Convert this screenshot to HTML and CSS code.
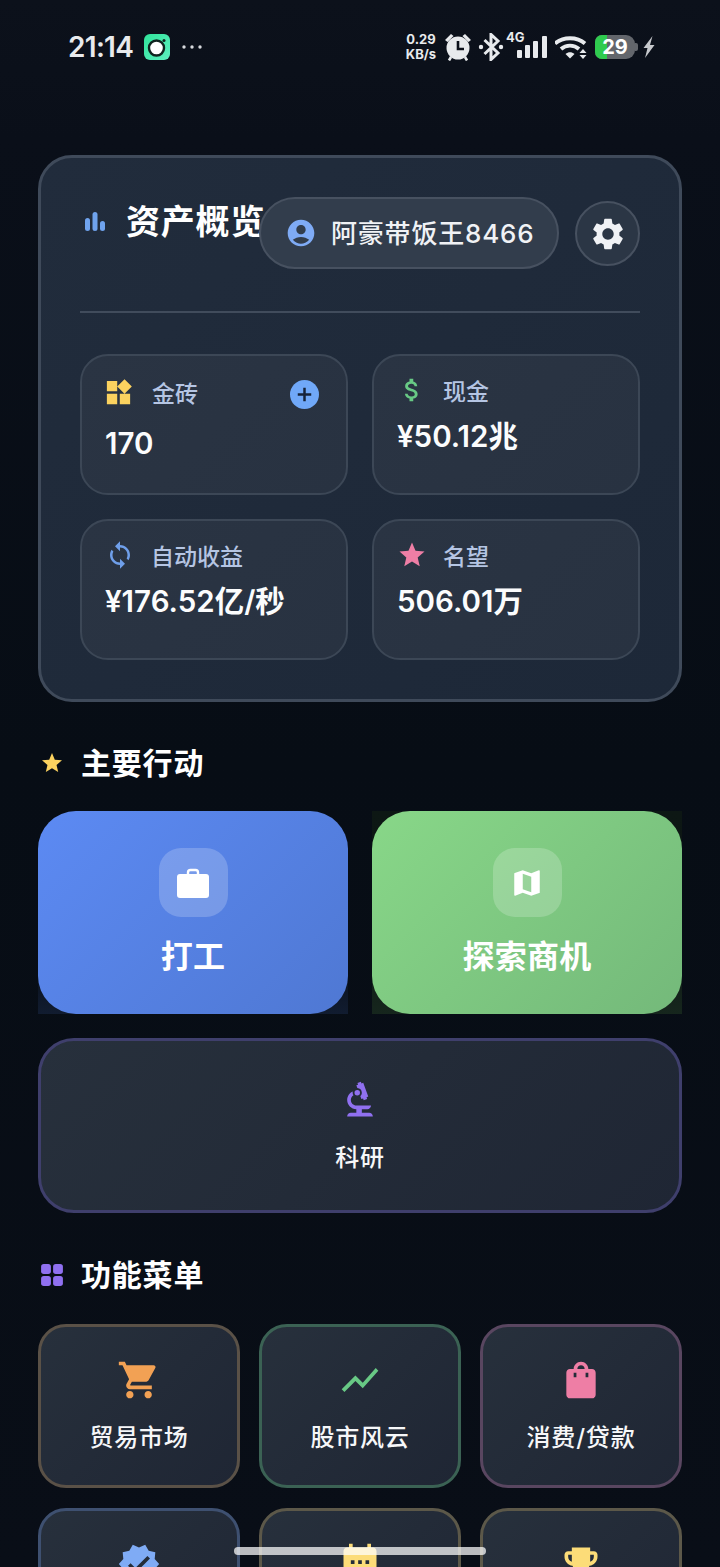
FILE: index.html
```html
<!DOCTYPE html>
<html lang="zh">
<head>
<meta charset="utf-8">
<title>资产概览</title>
<link rel="stylesheet" href="styles.css">
</head>
<body>
<header class="status">
  <div class="status-left">
    <span class="clock">21:14</span>
    <svg class="app-icon" viewBox="0 0 26 26"><defs><linearGradient id="ag" x1="0" y1="0" x2="1" y2="1"><stop offset="0" stop-color="#2fe39a"/><stop offset="1" stop-color="#5ff0c0"/></linearGradient></defs><rect width="26" height="26" rx="6" fill="url(#ag)"/><circle cx="12.5" cy="14" r="7.5" fill="#fff" stroke="#10241f" stroke-width="2.4"/><circle cx="20" cy="6.5" r="1.5" fill="#10241f"/></svg>
    <svg class="dots" viewBox="0 0 20 4"><circle cx="2" cy="2" r="1.7"/><circle cx="10" cy="2" r="1.7"/><circle cx="18" cy="2" r="1.7"/></svg>
  </div>
  <div class="status-right">
    <div class="speed"><span>0.29</span><span>KB/s</span></div>
    <svg class="ic-alarm" viewBox="0 0 26 28"><path d="M0 7 6 1l2.500 2-6 6zM26 7l-6-6-2.500 2 6 6z" fill="#e8eaed"/><path d="M6 24 4 27.500M20 24l2 3.500" stroke="#e8eaed" stroke-width="2.6"/><circle cx="13" cy="15" r="11.500" fill="#e8eaed"/><path d="M13 8v8h6" fill="none" stroke="#0c111b" stroke-width="2.6"/></svg>
    <svg class="ic-bt" viewBox="0 0 26 28"><path d="M6.500 7l13.500 13-7 6.500V1.500l7 6.500L6.500 21" fill="none" stroke="#e8eaed" stroke-width="3"/><circle cx="3" cy="14" r="2.200" fill="#e8eaed"/><circle cx="23" cy="14" r="2.200" fill="#e8eaed"/></svg>
    <div class="cell">
      <span class="net">4G</span>
      <svg class="ic-signal" viewBox="0 0 30 22"><rect x="0" y="14" width="5" height="8" rx="1"/><rect x="8" y="9" width="5" height="13" rx="1"/><rect x="16" y="5" width="5" height="17" rx="1"/><rect x="25" y="0" width="5" height="22" rx="1"/></svg>
    </div>
    <svg class="ic-wifi" viewBox="0 0 32 24"><path d="M0 8.500C8 1.500 22 1.500 30 8.500" fill="none" stroke="#e8eaed" stroke-width="3.8"/><path d="M6 14c5-4.500 13-4.500 18 0" fill="none" stroke="#e8eaed" stroke-width="3.800"/><path d="M10.500 19c2.800-2.500 6.200-2.500 9 0L15 23.500z" fill="#e8eaed"/><path d="M28 14l3.500 4h-7zM28 24l3.500-4h-7z" fill="#e8eaed"/></svg>
    <div class="battery"><span class="battery-fill"></span><span class="battery-num">29</span><span class="battery-cap"></span></div>
    <svg class="ic-bolt" viewBox="0 0 12 22"><path d="M9.500 0 .5 12h4L2 22l9.500-13H7z" fill="#c6c8cc"/></svg>
  </div>
</header>

<main class="page">
  <section class="assets">
    <div class="assets-head">
      <div class="assets-title">
        <svg class="ic-bars" viewBox="0 0 22 20"><rect x="1" y="6" width="5" height="13" rx="2.500"/><rect x="8.500" y="0" width="5" height="19" rx="2.500"/><rect x="16" y="9" width="5" height="10" rx="2.500"/></svg>
        <h1>资产概览</h1>
      </div>
      <button class="user-pill">
        <svg class="ic-user" viewBox="0 0 24 24"><path d="M12 2C6.480 2 2 6.480 2 12s4.480 10 10 10 10-4.480 10-10S17.520 2 12 2zm0 4c1.930 0 3.500 1.570 3.500 3.500S13.930 13 12 13s-3.500-1.570-3.500-3.500S10.070 6 12 6zm0 14c-2.030 0-4.430-.82-6.140-2.880C7.550 15.800 9.680 15 12 15s4.450.8 6.140 2.120C16.430 19.180 14.030 20 12 20z"/></svg>
        <span>阿豪带饭王8466</span>
      </button>
      <button class="gear">
        <svg viewBox="0 0 24 24"><path d="M19.140 12.940c.04-.3.06-.61.06-.94 0-.32-.02-.64-.07-.94l2.030-1.580c.18-.14.23-.41.12-.61l-1.920-3.320c-.12-.22-.37-.29-.59-.22l-2.390.96c-.5-.38-1.030-.7-1.620-.94l-.36-2.540c-.04-.24-.24-.41-.48-.41h-3.840c-.24 0-.43.17-.47.41l-.36 2.540c-.59.24-1.130.57-1.620.94l-2.390-.96c-.22-.08-.47 0-.59.22L2.740 8.870c-.12.21-.08.47.12.61l2.030 1.580c-.05.3-.09.63-.09.94s.02.64.07.94l-2.030 1.580c-.18.14-.23.41-.12.61l1.920 3.320c.12.22.37.29.59.22l2.390-.96c.5.38 1.030.7 1.620.94l.36 2.540c.05.24.24.41.48.41h3.840c.24 0 .44-.17.47-.41l.36-2.540c.59-.24 1.130-.56 1.620-.94l2.390.96c.22.08.47 0 .59-.22l1.920-3.320c.12-.22.07-.47-.12-.61l-2.010-1.580zM12 15.600c-1.980 0-3.600-1.620-3.600-3.600s1.620-3.600 3.600-3.600 3.600 1.620 3.600 3.600-1.620 3.600-3.600 3.600z"/></svg>
      </button>
    </div>
    <div class="stats">
      <div class="stat">
        <div class="stat-label stat-label-tall">
          <svg class="stat-icon gold" viewBox="0 0 24 24"><path d="M13 13v8h8v-8h-8zM3 21h8v-8H3v8zM3 3v8h8V3H3zm13.660-1.310L11 7.340 16.660 13l5.660-5.660-5.660-5.650z"/></svg>
          <span>金砖</span>
          <button class="plus"><svg viewBox="0 0 28 28"><path d="M14 7.500v13M7.500 14h13" stroke="#16233a" stroke-width="2.400" fill="none"/></svg></button>
        </div>
        <div class="stat-value">170</div>
      </div>
      <div class="stat">
        <div class="stat-label">
          <svg class="stat-icon green" viewBox="0 0 24 24"><path d="M11.800 10.900c-2.270-.59-3-1.200-3-2.150 0-1.090 1.010-1.850 2.700-1.850 1.780 0 2.440.85 2.500 2.100h2.210c-.07-1.720-1.120-3.300-3.210-3.810V3h-3v2.160c-1.940.42-3.500 1.680-3.500 3.610 0 2.310 1.910 3.460 4.700 4.130 2.500.6 3 1.480 3 2.410 0 .69-.49 1.790-2.700 1.790-2.060 0-2.870-.92-2.980-2.100h-2.200c.12 2.190 1.760 3.420 3.680 3.830V21h3v-2.150c1.950-.37 3.500-1.500 3.500-3.550 0-2.840-2.430-3.810-4.700-4.400z"/></svg>
          <span>现金</span>
        </div>
        <div class="stat-value">¥50.12兆</div>
      </div>
      <div class="stat">
        <div class="stat-label">
          <svg class="stat-icon blue" viewBox="0 0 24 24"><path d="M12 4V1L8 5l4 4V6c3.310 0 6 2.690 6 6 0 1.010-.25 1.970-.7 2.800l1.460 1.460C19.540 15.030 20 13.570 20 12c0-4.420-3.580-8-8-8zm0 14c-3.310 0-6-2.690-6-6 0-1.010.25-1.970.7-2.800L5.240 7.740C4.460 8.970 4 10.430 4 12c0 4.420 3.580 8 8 8v3l4-4-4-4v3z"/></svg>
          <span>自动收益</span>
        </div>
        <div class="stat-value">¥176.52亿/秒</div>
      </div>
      <div class="stat">
        <div class="stat-label">
          <svg class="stat-icon pink" viewBox="0 0 24 24"><path d="M12 17.270L18.180 21l-1.640-7.030L22 9.240l-7.190-.61L12 2 9.190 8.630 2 9.240l5.460 4.730L5.820 21z"/></svg>
          <span>名望</span>
        </div>
        <div class="stat-value">506.01万</div>
      </div>
    </div>
  </section>

  <section class="section">
    <h2 class="section-title">
      <svg class="section-icon gold" viewBox="0 0 24 24"><path d="M12 17.270L18.180 21l-1.640-7.030L22 9.240l-7.190-.61L12 2 9.190 8.630 2 9.240l5.460 4.730L5.820 21z"/></svg>
      主要行动
    </h2>
    <div class="actions">
      <button class="action action-blue">
        <span class="action-face">
          <span class="action-icon"><svg viewBox="0 0 34 34"><path d="M12 9V6.500C12 5 13 4 14.500 4h5C21 4 22 5 22 6.500V9" fill="none" stroke="#fff" stroke-width="2.400"/><rect x="1" y="8" width="32" height="24" rx="3" fill="#fff"/></svg></span>
          <span class="action-label">打工</span>
        </span>
      </button>
      <button class="action action-green">
        <span class="action-face">
          <span class="action-icon"><svg viewBox="0 0 24 24"><path fill-rule="evenodd" d="M20.500 3l-.16.03L15 5.100 9 3 3.360 4.900c-.21.07-.36.25-.36.48V20.500c0 .28.22.5.5.5l.16-.03L9 18.900l6 2.100 5.640-1.900c.21-.07.36-.25.36-.48V3.500c0-.28-.22-.5-.5-.5zM15 18.500l-6-2.110V5.500l6 2.110V18.500z" fill="#fff"/></svg></span>
          <span class="action-label">探索商机</span>
        </span>
      </button>
    </div>
    <button class="tile tile-wide">
      <svg class="tile-icon purple" viewBox="0 0 24 24"><path d="M7 19c-1.100 0-2 .9-2 2h14c0-1.100-.9-2-2-2h-4v-2h3c1.100 0 2-.9 2-2h-8c-1.660 0-3-1.340-3-3 0-1.090.59-2.040 1.460-2.560C8.170 9.030 8 8.540 8 8c0-.21.04-.42.09-.62C6.280 8.130 5 9.920 5 12c0 2.760 2.240 5 5 5v2H7z"/><path d="M10.560 5.510C11.910 5.540 13 6.640 13 8c0 .75-.33 1.410-.85 1.870l.59 1.620.94-.34.34.94 1.880-.68-.34-.94.94-.34-2.740-7.520-.94.34-.34-.94-1.880.68.34.94-.94.35.56 1.530z"/><circle cx="10.500" cy="8" r="1.500"/></svg>
      <span>科研</span>
    </button>
  </section>

  <section class="section section-menu">
    <h2 class="section-title">
      <svg class="section-icon purple" viewBox="0 0 22 22"><rect x="1" y="1" width="9" height="9" rx="2.500"/><rect x="12" y="1" width="9" height="9" rx="2.500"/><rect x="1" y="12" width="9" height="9" rx="2.500"/><rect x="12" y="12" width="9" height="9" rx="2.500"/></svg>
      功能菜单
    </h2>
    <div class="menu">
      <button class="tile tile-orange">
        <svg class="tile-icon orange" viewBox="0 0 24 24"><path d="M7 18c-1.100 0-1.990.9-1.990 2S5.900 22 7 22s2-.9 2-2-.9-2-2-2zM1 2v2h2l3.600 7.590-1.350 2.450c-.16.28-.25.61-.25.96 0 1.100.9 2 2 2h12v-2H7.420c-.14 0-.25-.11-.25-.25l.03-.12.9-1.630h7.450c.75 0 1.410-.41 1.750-1.030l3.580-6.470c.08-.14.12-.31.12-.48 0-.55-.45-1-1-1H5.210l-.94-2H1zm16 16c-1.100 0-1.990.9-1.990 2s.89 2 1.990 2 2-.9 2-2-.9-2-2-2z"/></svg>
        <span>贸易市场</span>
      </button>
      <button class="tile tile-green">
        <svg class="tile-icon green" viewBox="0 0 24 24"><path d="M3.500 18.490l6-6.010 4 4L22 6.920l-1.410-1.410-7.090 7.970-4-4L2 16.990z"/></svg>
        <span>股市风云</span>
      </button>
      <button class="tile tile-pink">
        <svg class="tile-icon pink" viewBox="0 0 24 24"><path fill-rule="evenodd" d="M18 6h-2c0-2.210-1.790-4-4-4S8 3.790 8 6H6c-1.100 0-2 .9-2 2v12c0 1.100.9 2 2 2h12c1.100 0 2-.9 2-2V8c0-1.100-.9-2-2-2zm-6-2c1.100 0 2 .9 2 2h-4c0-1.100.9-2 2-2zM8 8h1.500v2.500H8zm6.500 0H16v2.500h-1.500z"/></svg>
        <span>消费/贷款</span>
      </button>
      <button class="tile tile-cut tile-blue">
        <svg class="tile-icon light-blue" viewBox="0 0 24 24"><path d="M23 12l-2.440-2.780.34-3.680-3.610-.82-1.890-3.180L12 3 8.600 1.540 6.710 4.720l-3.610.81.34 3.680L1 12l2.440 2.780-.34 3.690 3.610.82 1.890 3.180L12 21l3.400 1.460 1.890-3.180 3.610-.82-.34-3.680L23 12zm-13 5l-4-4 1.410-1.410L10 14.170l6.590-6.590L18 9l-8 8z"/></svg>
      </button>
      <button class="tile tile-cut tile-yellow">
        <svg class="tile-icon yellow" viewBox="0 0 24 24"><path fill-rule="evenodd" d="M19 3h-1V1h-2v2H8V1H6v2H5C3.900 3 3 3.900 3 5v14c0 1.100.9 2 2 2h14c1.100 0 2-.9 2-2V5c0-1.100-.9-2-2-2zM7 10h2v2H7zm4 0h2v2h-2zm4 0h2v2h-2z"/></svg>
      </button>
      <button class="tile tile-cut tile-yellow">
        <svg class="tile-icon yellow" viewBox="0 0 24 24"><path d="M19 5h-2V3H7v2H5c-1.100 0-2 .9-2 2v1c0 2.550 1.920 4.630 4.390 4.940.63 1.500 1.980 2.630 3.610 2.960V19H7v2h10v-2h-4v-3.100c1.630-.33 2.980-1.460 3.610-2.960C19.080 12.630 21 10.550 21 8V7c0-1.100-.9-2-2-2zM5 8V7h2v3.820C5.840 10.400 5 9.300 5 8zm14 0c0 1.300-.84 2.400-2 2.820V7h2v1z"/></svg>
      </button>
    </div>
  </section>
</main>
<div class="home-bar"></div>
</body>
</html>
```
FILE: styles.css
```css
* { box-sizing: border-box; }
html, body { margin: 0; height: 1567px; overflow: hidden; }
body {
  background: linear-gradient(180deg, #0c111b 0, #0a0f19 140px, #070d15 760px, #090e17 1567px);
  color: #fff;
  font-family: Inter, "Noto Sans CJK SC", sans-serif;
}
button { font: inherit; color: inherit; cursor: pointer; padding: 0; }
svg { display: block; flex: none; }

/* status bar */
.status {
  height: 92px;
  margin-bottom: 63px;
  padding: 29px 65px 0 68px;
  display: flex;
  justify-content: space-between;
  align-items: flex-start;
}
.status-left { display: flex; align-items: center; height: 36px; }
.clock { font-size: 28px; font-weight: 600; color: #e8eaed; width: 76px; letter-spacing: -.7px; }
.app-icon { width: 26px; height: 26px; }
.dots { width: 20px; height: 4px; margin-left: 12px; fill: #d8dade; }
.status-right { display: flex; align-items: center; height: 36px; }
.speed {
  width: 32px; display: flex; flex-direction: column; align-items: center;
  font-size: 13px; line-height: 15px; font-weight: 700; color: #e8eaed;
}
.ic-alarm { width: 26px; height: 28px; margin-left: 8px; }
.ic-bt { width: 26px; height: 28px; margin-left: 7px; }
.cell { position: relative; width: 41px; height: 36px; margin-left: 2px; }
.net { position: absolute; left: 0; top: 1px; font-size: 13px; line-height: 14px; font-weight: 700; color: #e8eaed; }
.ic-signal { position: absolute; right: 0; bottom: 7px; width: 30px; height: 22px; fill: #e8eaed; }
.ic-wifi { width: 32px; height: 24px; margin-left: 8px; margin-top: -1px; }
.battery {
  position: relative; width: 40px; height: 24px; margin-left: 8px; margin-top: -1px;
  background: #63666c; border-radius: 7px 9px 9px 7px;
  display: flex; align-items: center; justify-content: center;
}
.battery-fill { position: absolute; left: 0; top: 0; bottom: 0; width: 12px; background: #2fcb4f; border-radius: 7px 0 0 7px; }
.battery-num { position: relative; font-size: 20px; font-weight: 700; color: #fff; }
.battery-cap { position: absolute; right: -3px; top: 8px; width: 3px; height: 8px; background: #63666c; border-radius: 0 2px 2px 0; }
.ic-bolt { width: 12px; height: 22px; margin-left: 8px; }

/* page */
.page { padding: 0 38px; }

.assets {
  height: 547px;
  padding: 39px;
  border: 3px solid #3f4a5a;
  border-radius: 34px;
  background: linear-gradient(135deg, #212c3c 0, #1d2838 100%);
}
.assets-head {
  display: flex;
  align-items: flex-start;
  height: 116px;
  padding-bottom: 42px;
  border-bottom: 2px solid #414c5c;
}
.assets-title { flex: 1 1 0; min-width: 0; height: 50px; display: flex; align-items: center; }
.assets-title h1 { margin: 0 0 0 20px; font-size: 34px; line-height: 50px; font-weight: 700; letter-spacing: .8px; white-space: nowrap; }
.ic-bars { width: 22px; height: 20px; margin-left: 4px; fill: #6fa3ee; }
.user-pill {
  position: relative;
  flex: none;
  width: 300px; height: 72px;
  margin-right: 16px;
  display: flex; align-items: center;
  padding-left: 24px;
  border: 2px solid #475160;
  border-radius: 36px;
  background: #323d4c;
  font-size: 26px;
  font-weight: 500;
  letter-spacing: .8px;
  color: #f0f2f5;
}
.user-pill span { margin-top: -4px; }
.ic-user { width: 32px; height: 32px; margin-right: 14px; fill: #7fabf5; }
.gear {
  flex: none;
  width: 65px; height: 65px;
  margin-top: 4px;
  display: flex; align-items: center; justify-content: center;
  border: 2px solid #475160;
  border-radius: 50%;
  background: #2b3645;
}
.gear svg { width: 38px; height: 38px; fill: #f0f2f5; }

.stats {
  margin-top: 41px;
  display: grid;
  grid-template-columns: 268px 268px;
  grid-auto-rows: 141px;
  gap: 24px;
}
.stat {
  padding: 19px 23px 0;
  border: 2px solid #3c4756;
  border-radius: 28px;
  background: linear-gradient(135deg, #2a3443 0, #283241 100%);
}
.stat-label {
  display: flex; align-items: center;
  height: 30px;
  font-size: 23px;
  font-weight: 500;
  color: #b5c5e3;
}
.stat-label-tall { height: 32px; margin-top: 1px; }
.stat-label span { margin-left: 16px; }
.stat-label-tall span { margin-left: 18px; }
.stat-icon { width: 30px; height: 30px; }
.gold { fill: #fbd25f; }
.green { fill: #68c985; }
.blue { fill: #6f9fea; }
.light-blue { fill: #7fabf5; }
.pink { fill: #ee7ea5; }
.purple { fill: #9070f0; }
.orange { fill: #f2a154; }
.yellow { fill: #fcdc78; }
.stat-label-tall .stat-icon { width: 31px; height: 31px; margin-left: -2px; }
.plus {
  margin-left: auto; margin-right: 4px; margin-top: 4px;
  width: 29px; height: 29px;
  border: 0; border-radius: 50%;
  background: #70a8f8;
}
.plus svg { width: 29px; height: 29px; }
.stat-value { margin-top: 10px; font-size: 29.5px; line-height: 42px; font-weight: 600; color: #fbfcfd; white-space: nowrap; }
.stat-label-tall + .stat-value { margin-top: 14px; }

.section { margin-top: 39px; }
.section-title {
  margin: 0;
  height: 44px;
  display: flex; align-items: center; gap: 17px;
  font-size: 30px; line-height: 44px; font-weight: 600;
  letter-spacing: .8px;
}
.section-icon { width: 24px; height: 24px; margin-left: 2px; }
.actions { margin-top: 26px; display: grid; grid-template-columns: 310px 310px; gap: 24px; }
.action {
  display: block;
  height: 203px;
  border: 0;
  background: linear-gradient(180deg, transparent 70%, #111c30);
}
.action-green { background: linear-gradient(180deg, #0d1714, #0c1512 60%, #16261d); }
.action-face {
  display: flex; flex-direction: column; align-items: center;
  height: 203px;
  padding-top: 37px;
  border-radius: 38px;
}
.action-blue .action-face { background: linear-gradient(135deg, #5c8af3 0, #4f78d3 100%); }
.action-green .action-face { background: linear-gradient(135deg, #88d788 0, #74b97a 100%); }
.action-icon {
  width: 69px; height: 69px;
  display: flex; align-items: center; justify-content: center;
  border-radius: 22px;
  background: rgba(255,255,255,.2);
}
.action-icon svg { width: 34px; height: 34px; }
.action-label { margin-top: 15px; font-size: 32px; line-height: 50px; font-weight: 600; letter-spacing: .3px; }

.tile {
  display: flex; flex-direction: column; align-items: center; justify-content: center;
  gap: 18px;
  padding-top: 2px;
  border: 3px solid;
  border-radius: 28px;
  background: linear-gradient(135deg, #27303c 0, #1f2634 100%);
  font-size: 24px; line-height: 36px;
  font-weight: 500;
  letter-spacing: .8px;
  color: #f6f7f9;
}
.tile-icon { width: 44px; height: 44px; }
.tile-cut { justify-content: flex-start; padding-top: 31px; }
.tile-wide {
  width: 644px; height: 175px;
  margin-top: 24px;
  gap: 18px;
  border-color: #3f3f6c;
  border-radius: 36px;
}
.section-menu { margin-top: 40px; }
.menu { margin-top: 27px; display: grid; grid-template-columns: repeat(3, 202px); grid-auto-rows: 164px; gap: 20px 19px; }
.tile-orange { border-color: #5a5147; }
.tile-green { border-color: #3b6254; }
.tile-pink { border-color: #594660; }
.tile-blue { border-color: #3e5070; }
.tile-yellow { border-color: #5c5849; }

.home-bar {
  position: fixed; left: 234px; top: 1547px;
  width: 252px; height: 8px;
  border-radius: 4px;
  background: rgba(255,255,255,.72);
}
```
